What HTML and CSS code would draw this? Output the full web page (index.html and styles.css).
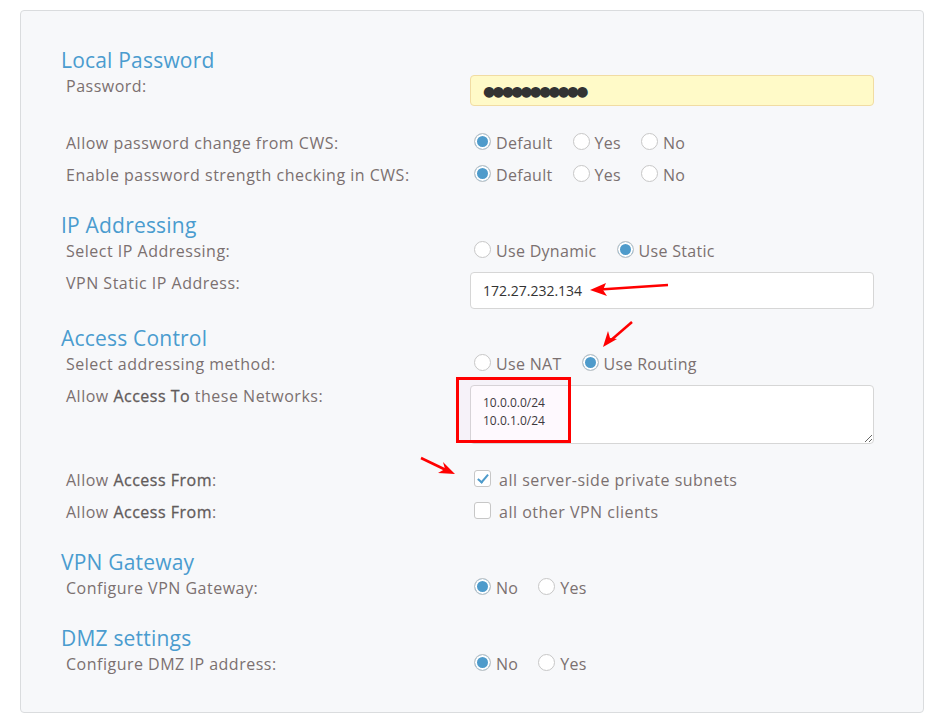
FILE: index.html
```html
<!DOCTYPE html>
<html lang="en">
    <head>
        <meta charset="utf-8">
        <title>VPN Settings</title>
        <link rel="stylesheet" href="styles.css">
    </head>
    <body>
        <div class="panel">
            <h2>Local Password</h2>
            <div class="row row-spaced">
                <span class="label">Password:</span>
                <div class="field"><input class="input input-pass" type="text" value="●●●●●●●●●●●" readonly></div>
            </div>
            <div class="row">
                <span class="label">Allow password change from CWS:</span>
                <div class="choices">
                    <label><input type="radio" name="pwchange" checked> Default</label>
                    <label><input type="radio" name="pwchange"> Yes</label>
                    <label><input type="radio" name="pwchange"> No</label>
                </div>
            </div>
            <div class="row">
                <span class="label">Enable password strength checking in CWS:</span>
                <div class="choices">
                    <label><input type="radio" name="pwstrength" checked> Default</label>
                    <label><input type="radio" name="pwstrength"> Yes</label>
                    <label><input type="radio" name="pwstrength"> No</label>
                </div>
            </div>

            <h2>IP Addressing</h2>
            <div class="row">
                <span class="label">Select IP Addressing:</span>
                <div class="choices">
                    <label><input type="radio" name="ipaddr"> Use Dynamic</label>
                    <label><input type="radio" name="ipaddr" checked> Use Static</label>
                </div>
            </div>
            <div class="row">
                <span class="label">VPN Static IP Address:</span>
                <div class="field"><input class="input input-ip" type="text" value="172.27.232.134"></div>
            </div>

            <h2>Access Control</h2>
            <div class="row">
                <span class="label">Select addressing method:</span>
                <div class="choices">
                    <label><input type="radio" name="method"> Use NAT</label>
                    <label><input type="radio" name="method" checked> Use Routing</label>
                </div>
            </div>
            <div class="row row-spaced">
                <span class="label">Allow <b>Access To</b> these Networks:</span>
                <div class="field"><textarea class="input networks">10.0.0.0/24
10.0.1.0/24</textarea></div>
            </div>
            <div class="row">
                <span class="label">Allow <b>Access From</b>:</span>
                <div class="choices">
                    <label class="check"><input type="checkbox" checked> all server-side private subnets</label>
                </div>
            </div>
            <div class="row">
                <span class="label">Allow <b>Access From</b>:</span>
                <div class="choices">
                    <label class="check"><input type="checkbox"> all other VPN clients</label>
                </div>
            </div>

            <h2>VPN Gateway</h2>
            <div class="row">
                <span class="label">Configure VPN Gateway:</span>
                <div class="choices">
                    <label><input type="radio" name="gateway" checked> No</label>
                    <label><input type="radio" name="gateway"> Yes</label>
                </div>
            </div>

            <h2>DMZ settings</h2>
            <div class="row">
                <span class="label">Configure DMZ IP address:</span>
                <div class="choices">
                    <label><input type="radio" name="dmz" checked> No</label>
                    <label><input type="radio" name="dmz"> Yes</label>
                </div>
            </div>
        </div>

        <!-- screenshot annotations -->
        <div class="mark-box"></div>
        <svg class="marks" width="939" height="722">
            <g stroke="#f00" stroke-width="2.5" fill="#f00">
                <line x1="668" y1="285" x2="600" y2="289.5"/>
                <path d="M590 290 L606 283 L603 290 L607 296 Z" stroke="none"/>
                <line x1="632" y1="322" x2="610" y2="341"/>
                <path d="M603 347 L608 331 L610 338 L617 339 Z" stroke="none"/>
                <line x1="421" y1="458" x2="446" y2="470"/>
                <path d="M455 474 L438 473 L445 469 L443 462 Z" stroke="none"/>
            </g>
        </svg>
    </body>
</html>
```

FILE: styles.css
```css
body {
    margin: 10px 0 0 20px;
    font-family: 'Open Sans', 'DejaVu Sans', sans-serif;
    font-size: 16px;
    letter-spacing: 0.5px;
    color: #7b7070;
    background: #fff;
}
.panel {
    width: 822px;
    padding: 37px 40px 27px 40px;
    background: #f7f8fa;
    border: 1px solid #dadcde;
    border-radius: 4px;
}
h2 {
    margin: 17px 0 3px;
    font-size: 21px;
    letter-spacing: 0.2px;
    line-height: 24px;
    font-weight: normal;
    color: #4a9ccf;
}
h2:first-child {
    margin-top: 0;
}
.row {
    display: grid;
    grid-template-columns: 409px 404px;
    align-items: start;
    min-height: 32px;
}
.row-spaced {
    margin-bottom: 25px;
}
.label {
    padding-left: 5px;
    line-height: 22px;
}
.label b {
    font-weight: normal;
    color: #625b5b;
    -webkit-text-stroke: 0.3px #625b5b;
}
.choices {
    display: flex;
    gap: 20px;
    padding-left: 4px;
    line-height: 22px;
    letter-spacing: 0.3px;
}
.choices label {
    display: flex;
    align-items: center;
    gap: 5px;
    white-space: nowrap;
}
.choices .check {
    gap: 8px;
    letter-spacing: 0.5px;
}
.choices input {
    -webkit-appearance: none;
    appearance: none;
    margin: 0;
    width: 17px;
    height: 17px;
    background: #fff;
    border: 1px solid #c7c7c7;
    position: relative;
    top: -2px;
}
input[type=radio] {
    border-radius: 50%;
}
input[type=radio]:checked {
    background: #4e9bcb;
    box-shadow: inset 0 0 0 2px #fff;
}
input[type=checkbox] {
    border-radius: 3px;
}
input[type=checkbox]:checked::after {
    content: '';
    position: absolute;
    left: 5px;
    top: 1px;
    width: 4px;
    height: 9px;
    border: solid #4e9bcb;
    border-width: 0 2px 2px 0;
    transform: rotate(40deg);
}
.input {
    box-sizing: border-box;
    width: 404px;
    display: block;
    margin: 0;
    border: 1px solid #d6d6d6;
    border-radius: 4px;
    background: #fff;
    color: #333;
    font-family: inherit;
    letter-spacing: 0;
    padding: 0 12px;
}
.input-pass {
    height: 31px;
    background: #fffac8;
    border-color: #f1dca3;
    font-size: 14px;
    letter-spacing: -2.9px;
}
.input-ip {
    height: 37px;
    font-size: 14px;
}
.networks {
    height: 59px;
    padding-top: 8px;
    font-size: 12px;
    line-height: 18px;
    resize: vertical;
}
.mark-box {
    position: absolute;
    left: 456px;
    top: 377px;
    width: 109px;
    height: 60px;
    border: 3px solid #f00;
    background: rgba(230, 160, 230, 0.06);
}
.marks {
    position: absolute;
    left: 0;
    top: 0;
    pointer-events: none;
}
```
